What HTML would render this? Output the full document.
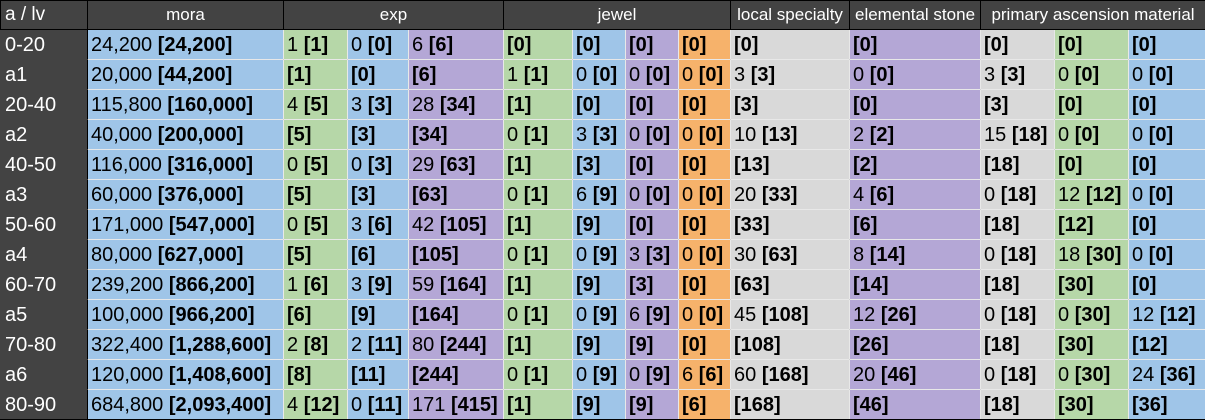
<!DOCTYPE html>
<html><head><meta charset="utf-8"><style>
html,body{margin:0;padding:0;background:#fff;width:1205px;height:420px;overflow:hidden}
table{border-collapse:collapse;table-layout:fixed;width:1205px;font-family:"Liberation Sans",Arial,sans-serif;font-size:20px}
td,th{padding:0 0 0 3px;white-space:nowrap;overflow:hidden;height:29px;border:1px solid rgba(0,0,0,0.09);color:#000;font-weight:normal;text-align:left;line-height:22px}
th{background:#434343;color:#fff;font-size:17px;text-align:center;height:28px;border:1px solid #000;padding:0}
th.l{text-align:left;padding-left:4px;font-size:19px}
td.h{background:#434343;color:#fff;border-color:#434343;border-right:1px solid #000;padding-left:4px}
b{font-weight:bold}
.B{background:#9fc5e8}.G{background:#b6d7a8}.P{background:#b4a7d6}.O{background:#f6b26b}.Y{background:#d9d9d9}
.k{border-left:1px solid #000}
tr:last-child td{border-bottom:1px solid #000}
</style></head><body>
<table>
<colgroup><col style="width:87px"><col style="width:196px"><col style="width:64px"><col style="width:61px"><col style="width:95px"><col style="width:69px"><col style="width:53px"><col style="width:53px"><col style="width:52px"><col style="width:119px"><col style="width:131px"><col style="width:74px"><col style="width:74px"><col style="width:77px"></colgroup>
<tr><th class="l">a / lv</th><th>mora</th><th colspan="3">exp</th><th colspan="4">jewel</th><th>local specialty</th><th>elemental stone</th><th colspan="3">primary ascension material</th></tr>
<tr><td class="h">0-20</td><td class="B">24,200 <b>[24,200]</b></td><td class="G k">1 <b>[1]</b></td><td class="B">0 <b>[0]</b></td><td class="P">6 <b>[6]</b></td><td class="G k"><b>[0]</b></td><td class="B"><b>[0]</b></td><td class="P"><b>[0]</b></td><td class="O"><b>[0]</b></td><td class="Y k"><b>[0]</b></td><td class="P k"><b>[0]</b></td><td class="Y k"><b>[0]</b></td><td class="G"><b>[0]</b></td><td class="B"><b>[0]</b></td></tr>
<tr><td class="h">a1</td><td class="B">20,000 <b>[44,200]</b></td><td class="G k"><b>[1]</b></td><td class="B"><b>[0]</b></td><td class="P"><b>[6]</b></td><td class="G k">1 <b>[1]</b></td><td class="B">0 <b>[0]</b></td><td class="P">0 <b>[0]</b></td><td class="O">0 <b>[0]</b></td><td class="Y k">3 <b>[3]</b></td><td class="P k">0 <b>[0]</b></td><td class="Y k">3 <b>[3]</b></td><td class="G">0 <b>[0]</b></td><td class="B">0 <b>[0]</b></td></tr>
<tr><td class="h">20-40</td><td class="B">115,800 <b>[160,000]</b></td><td class="G k">4 <b>[5]</b></td><td class="B">3 <b>[3]</b></td><td class="P">28 <b>[34]</b></td><td class="G k"><b>[1]</b></td><td class="B"><b>[0]</b></td><td class="P"><b>[0]</b></td><td class="O"><b>[0]</b></td><td class="Y k"><b>[3]</b></td><td class="P k"><b>[0]</b></td><td class="Y k"><b>[3]</b></td><td class="G"><b>[0]</b></td><td class="B"><b>[0]</b></td></tr>
<tr><td class="h">a2</td><td class="B">40,000 <b>[200,000]</b></td><td class="G k"><b>[5]</b></td><td class="B"><b>[3]</b></td><td class="P"><b>[34]</b></td><td class="G k">0 <b>[1]</b></td><td class="B">3 <b>[3]</b></td><td class="P">0 <b>[0]</b></td><td class="O">0 <b>[0]</b></td><td class="Y k">10 <b>[13]</b></td><td class="P k">2 <b>[2]</b></td><td class="Y k">15 <b>[18]</b></td><td class="G">0 <b>[0]</b></td><td class="B">0 <b>[0]</b></td></tr>
<tr><td class="h">40-50</td><td class="B">116,000 <b>[316,000]</b></td><td class="G k">0 <b>[5]</b></td><td class="B">0 <b>[3]</b></td><td class="P">29 <b>[63]</b></td><td class="G k"><b>[1]</b></td><td class="B"><b>[3]</b></td><td class="P"><b>[0]</b></td><td class="O"><b>[0]</b></td><td class="Y k"><b>[13]</b></td><td class="P k"><b>[2]</b></td><td class="Y k"><b>[18]</b></td><td class="G"><b>[0]</b></td><td class="B"><b>[0]</b></td></tr>
<tr><td class="h">a3</td><td class="B">60,000 <b>[376,000]</b></td><td class="G k"><b>[5]</b></td><td class="B"><b>[3]</b></td><td class="P"><b>[63]</b></td><td class="G k">0 <b>[1]</b></td><td class="B">6 <b>[9]</b></td><td class="P">0 <b>[0]</b></td><td class="O">0 <b>[0]</b></td><td class="Y k">20 <b>[33]</b></td><td class="P k">4 <b>[6]</b></td><td class="Y k">0 <b>[18]</b></td><td class="G">12 <b>[12]</b></td><td class="B">0 <b>[0]</b></td></tr>
<tr><td class="h">50-60</td><td class="B">171,000 <b>[547,000]</b></td><td class="G k">0 <b>[5]</b></td><td class="B">3 <b>[6]</b></td><td class="P">42 <b>[105]</b></td><td class="G k"><b>[1]</b></td><td class="B"><b>[9]</b></td><td class="P"><b>[0]</b></td><td class="O"><b>[0]</b></td><td class="Y k"><b>[33]</b></td><td class="P k"><b>[6]</b></td><td class="Y k"><b>[18]</b></td><td class="G"><b>[12]</b></td><td class="B"><b>[0]</b></td></tr>
<tr><td class="h">a4</td><td class="B">80,000 <b>[627,000]</b></td><td class="G k"><b>[5]</b></td><td class="B"><b>[6]</b></td><td class="P"><b>[105]</b></td><td class="G k">0 <b>[1]</b></td><td class="B">0 <b>[9]</b></td><td class="P">3 <b>[3]</b></td><td class="O">0 <b>[0]</b></td><td class="Y k">30 <b>[63]</b></td><td class="P k">8 <b>[14]</b></td><td class="Y k">0 <b>[18]</b></td><td class="G">18 <b>[30]</b></td><td class="B">0 <b>[0]</b></td></tr>
<tr><td class="h">60-70</td><td class="B">239,200 <b>[866,200]</b></td><td class="G k">1 <b>[6]</b></td><td class="B">3 <b>[9]</b></td><td class="P">59 <b>[164]</b></td><td class="G k"><b>[1]</b></td><td class="B"><b>[9]</b></td><td class="P"><b>[3]</b></td><td class="O"><b>[0]</b></td><td class="Y k"><b>[63]</b></td><td class="P k"><b>[14]</b></td><td class="Y k"><b>[18]</b></td><td class="G"><b>[30]</b></td><td class="B"><b>[0]</b></td></tr>
<tr><td class="h">a5</td><td class="B">100,000 <b>[966,200]</b></td><td class="G k"><b>[6]</b></td><td class="B"><b>[9]</b></td><td class="P"><b>[164]</b></td><td class="G k">0 <b>[1]</b></td><td class="B">0 <b>[9]</b></td><td class="P">6 <b>[9]</b></td><td class="O">0 <b>[0]</b></td><td class="Y k">45 <b>[108]</b></td><td class="P k">12 <b>[26]</b></td><td class="Y k">0 <b>[18]</b></td><td class="G">0 <b>[30]</b></td><td class="B">12 <b>[12]</b></td></tr>
<tr><td class="h">70-80</td><td class="B">322,400 <b>[1,288,600]</b></td><td class="G k">2 <b>[8]</b></td><td class="B">2 <b>[11]</b></td><td class="P">80 <b>[244]</b></td><td class="G k"><b>[1]</b></td><td class="B"><b>[9]</b></td><td class="P"><b>[9]</b></td><td class="O"><b>[0]</b></td><td class="Y k"><b>[108]</b></td><td class="P k"><b>[26]</b></td><td class="Y k"><b>[18]</b></td><td class="G"><b>[30]</b></td><td class="B"><b>[12]</b></td></tr>
<tr><td class="h">a6</td><td class="B">120,000 <b>[1,408,600]</b></td><td class="G k"><b>[8]</b></td><td class="B"><b>[11]</b></td><td class="P"><b>[244]</b></td><td class="G k">0 <b>[1]</b></td><td class="B">0 <b>[9]</b></td><td class="P">0 <b>[9]</b></td><td class="O">6 <b>[6]</b></td><td class="Y k">60 <b>[168]</b></td><td class="P k">20 <b>[46]</b></td><td class="Y k">0 <b>[18]</b></td><td class="G">0 <b>[30]</b></td><td class="B">24 <b>[36]</b></td></tr>
<tr><td class="h">80-90</td><td class="B">684,800 <b>[2,093,400]</b></td><td class="G k">4 <b>[12]</b></td><td class="B">0 <b>[11]</b></td><td class="P">171 <b>[415]</b></td><td class="G k"><b>[1]</b></td><td class="B"><b>[9]</b></td><td class="P"><b>[9]</b></td><td class="O"><b>[6]</b></td><td class="Y k"><b>[168]</b></td><td class="P k"><b>[46]</b></td><td class="Y k"><b>[18]</b></td><td class="G"><b>[30]</b></td><td class="B"><b>[36]</b></td></tr>
</table>
</body></html>
